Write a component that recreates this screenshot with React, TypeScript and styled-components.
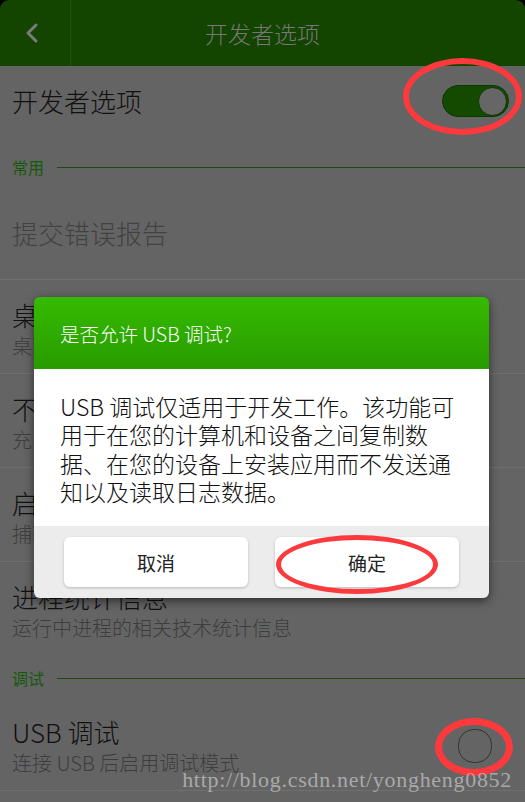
import React from 'react'
import styled, {createGlobalStyle} from 'styled-components'

const GlobalStyle = createGlobalStyle`
  html, body {
    margin: 0;
    padding: 0;
    background: #646464;
  }
  * {
    box-sizing: border-box;
  }
`

const font = `"Noto Sans CJK SC", "Noto Sans", Roboto, sans-serif`

interface RowItem {
  title:    string
  sub?:     string
  last?:    boolean
}

const rows: RowItem[] = [
  {title: '桌面备份密码', sub: '桌面完整备份当前未设置密码保护'},
  {title: '不锁定屏幕', sub: '充电时屏幕不会休眠'},
  {title: '启用蓝牙HCI信息收集日志', sub: '捕获单个文件中的所有蓝牙HCI数据包'},
  {title: '进程统计信息', sub: '运行中进程的相关技术统计信息', last: true},
]

export default function App() {
  return (
    <>
      <GlobalStyle />
      <Screen>
        <TopEdge>
          <Header>
            <Back>
              <svg width="14" height="20" viewBox="0 0 14 20">
                <path d="M11 2 L3 10 L11 18" fill="none" stroke="#7a7a7a" strokeWidth="3" strokeLinecap="round" strokeLinejoin="round" />
              </svg>
            </Back>
            <HeaderTitle>开发者选项</HeaderTitle>
          </Header>
        </TopEdge>

        <SwitchRow>
          <BigTitle>开发者选项</BigTitle>
          <Track><Knob /></Track>
        </SwitchRow>

        <Section $top={20}>
          <SectionLabel>常用</SectionLabel>
          <SectionLine />
        </Section>

        <Row $top={0}>
          <Texts>
            <BigTitle $disabled>提交错误报告</BigTitle>
          </Texts>
        </Row>

        {rows.map((r, i) => (
          <Row key={i} $last={r.last}>
            <Texts>
              <BigTitle>{r.title}</BigTitle>
              <Sub>{r.sub}</Sub>
            </Texts>
          </Row>
        ))}

        <Section $top={11}>
          <SectionLabel>调试</SectionLabel>
          <SectionLine />
        </Section>

        <Row>
          <Texts>
            <BigTitle>USB 调试</BigTitle>
            <Sub>连接 USB 后启用调试模式</Sub>
          </Texts>
          <CheckCircle />
        </Row>

        <Dialog>
          <DialogHead>是否允许 USB 调试?</DialogHead>
          <DialogBody>
            USB 调试仅适用于开发工作。该功能可用于在您的计算机和设备之间复制数据、在您的设备上安装应用而不发送通知以及读取日志数据。
          </DialogBody>
          <DialogActions>
            <DialogButton>取消</DialogButton>
            <DialogButton>确定</DialogButton>
          </DialogActions>
        </Dialog>

        <RedRing $x={403} $y={58} $w={119} $h={77} $stroke={6} />
        <RedRing $x={276} $y={535} $w={162} $h={59} $stroke={5} />
        <RedRing $x={435} $y={718} $w={78} $h={58} $stroke={7} />

        <Watermark>http://blog.csdn.net/yongheng0852</Watermark>
      </Screen>
    </>
  )
}

const Screen = styled.div`
  position: relative;
  width: 525px;
  height: 802px;
  overflow: hidden;
  background: #646464;
  font-family: ${font};
  color: #111;
`

const TopEdge = styled.div`
  background: #000;
`

const Header = styled.div`
  height: 66px;
  display: flex;
  align-items: stretch;
  background: #134400;
  border-radius: 9px 9px 0 0;
`

const Back = styled.div`
  width: 71px;
  display: flex;
  align-items: center;
  justify-content: center;
  padding-right: 6px;
  border-right: 1px solid #1e5412;
`

const HeaderTitle = styled.div`
  flex: 1;
  display: flex;
  align-items: center;
  justify-content: center;
  padding-right: 71px;
  font-size: 23px;
  font-weight: 300;
  color: #777;
`

const SwitchRow = styled.div`
  height: 70px;
  display: flex;
  align-items: center;
  justify-content: space-between;
  padding: 0 16px 0 12px;
`

const BigTitle = styled.div<{$disabled?: boolean}>`
  font-size: 26px;
  line-height: 34px;
  font-weight: 300;
  color: ${p => p.$disabled ? '#424242' : '#111'};
  white-space: nowrap;
`

const Track = styled.div`
  width: 67px;
  height: 32px;
  border-radius: 16px;
  background: #134a00;
  border: 1px solid #0e3800;
  display: flex;
  align-items: center;
  justify-content: flex-end;
  padding-right: 1px;
`

const Knob = styled.div`
  width: 29px;
  height: 29px;
  border-radius: 50%;
  background: #666;
  border: 1.5px solid #0d3600;
`

const Section = styled.div<{$top: number}>`
  display: flex;
  align-items: center;
  gap: 13px;
  padding: ${p => p.$top}px 0 8px 12px;
`

const SectionLabel = styled.div`
  font-size: 16px;
  line-height: 22px;
  color: #155a0b;
`

const SectionLine = styled.div`
  flex: 1;
  height: 1px;
  background: #1c4a12;
`

const Row = styled.div<{$last?: boolean; $top?: number}>`
  height: 94px;
  display: flex;
  align-items: center;
  justify-content: space-between;
  padding: ${p => p.$top ?? 4}px 33px 0 12px;
  border-bottom: ${p => p.$last ? 'none' : '1px solid #6f6f6f'};
`

const Texts = styled.div`
  display: flex;
  flex-direction: column;
`

const Sub = styled.div`
  font-size: 20px;
  line-height: 28px;
  font-weight: 300;
  color: #3d3d3d;
  white-space: nowrap;
`

const CheckCircle = styled.div`
  width: 34px;
  height: 34px;
  border-radius: 46%;
  border: 1.5px solid #333;
`

const Dialog = styled.div`
  position: absolute;
  top: 297px;
  left: 34px;
  width: 455px;
  border-radius: 6px;
  overflow: hidden;
  box-shadow: 0 3px 10px rgba(0, 0, 0, 0.55);
`

const DialogHead = styled.div`
  height: 72px;
  display: flex;
  align-items: center;
  padding: 0 26px;
  background: linear-gradient(#36bb00, #289b00);
  color: #fff;
  font-size: 19.5px;
  font-weight: 300;
`

const DialogBody = styled.div`
  height: 157px;
  background: #fff;
  padding: 23px 24px 0 26px;
  font-size: 23px;
  line-height: 28.4px;
  font-weight: 300;
  color: #111;
`

const DialogActions = styled.div`
  height: 72px;
  display: flex;
  gap: 27px;
  padding: 11px 30px;
  background: #ececec;
`

const DialogButton = styled.div`
  flex: 1;
  height: 50px;
  display: flex;
  align-items: center;
  justify-content: center;
  background: #fff;
  border-radius: 6px;
  box-shadow: 0 1px 3px rgba(0, 0, 0, 0.22);
  font-size: 19px;
  color: #222;
`

const RedRing = styled.div<{$x: number; $y: number; $w: number; $h: number; $stroke: number}>`
  position: absolute;
  left: ${p => p.$x}px;
  top: ${p => p.$y}px;
  width: ${p => p.$w}px;
  height: ${p => p.$h}px;
  border: ${p => p.$stroke}px solid #fc3a3e;
  border-radius: 50%;
`

const Watermark = styled.div`
  position: absolute;
  right: 13px;
  top: 767px;
  font-family: "Liberation Serif", "DejaVu Serif", serif;
  font-size: 22px;
  line-height: 26px;
  color: #a9a9a9;
  letter-spacing: 0.7px;
`
